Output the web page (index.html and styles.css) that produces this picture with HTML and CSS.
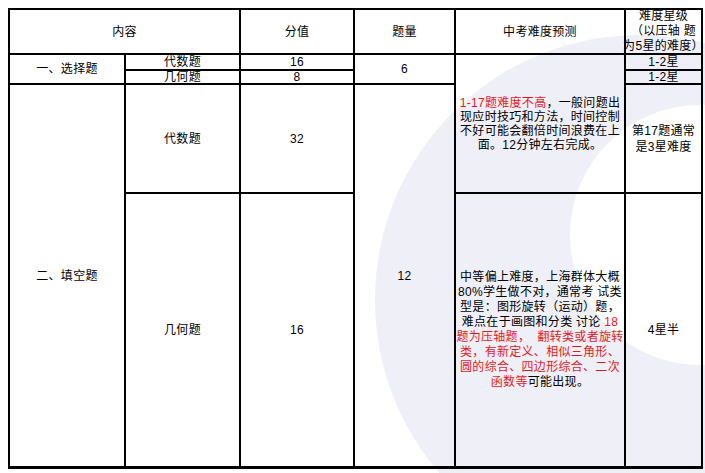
FILE: index.html
```html
<!DOCTYPE html>
<html lang="zh-CN">
<head>
<meta charset="utf-8">
<title>中考题型难度</title>
<link rel="stylesheet" href="styles.css">
</head>
<body>
<svg class="watermark" width="705" height="473" viewBox="0 0 705 473" aria-hidden="true">
  <path fill-rule="evenodd" fill="#efeff7" d="M375 300a265 265 0 1 0 530 0a265 265 0 1 0 -530 0Z M570 235a130 130 0 1 0 260 0a130 130 0 1 0 -260 0Z"/>
</svg>
<div class="sheet">
  <div class="cell span-c2">内容</div>
  <div class="cell">分值</div>
  <div class="cell">题量</div>
  <div class="cell">中考难度预测</div>
  <div class="cell lh15"><span>难度星级</span><span>（以压轴 题</span><span>为5星的难度）</span></div>

  <div class="cell span-r2">一、选择题</div>
  <div class="cell">代数题</div>
  <div class="cell">16</div>
  <div class="cell span-r2">6</div>
  <div class="cell span-r3 note">
    <span><em class="red">1-17题难度不高</em>，一般问题出</span>
    <span>现应时技巧和方法，时间控制</span>
    <span>不好可能会翻倍时间浪费在上</span>
    <span>面。12分钟左右完成。</span>
  </div>
  <div class="cell">1-2星</div>

  <div class="cell">几何题</div>
  <div class="cell">8</div>
  <div class="cell">1-2星</div>

  <div class="cell span-r2 bottom">二、填空题</div>
  <div class="cell">代数题</div>
  <div class="cell">32</div>
  <div class="cell span-r2 bottom">12</div>
  <div class="cell lh16"><span>第17题通常</span><span>是3星难度</span></div>

  <div class="cell bottom">几何题</div>
  <div class="cell bottom">16</div>
  <div class="cell bottom note lh15">
    <span>中等偏上难度，上海群体大概</span>
    <span>80%学生做不对，通常考 试类</span>
    <span>型是：图形旋转（运动）题，</span>
    <span>难点在于画图和分类 讨论 <em class="red">18</em></span>
    <span class="red">题为压轴题，  翻转类或者旋转</span>
    <span class="red">类，有新定义、相似三角形、</span>
    <span class="red">圆的综合、四边形综合、二次</span>
    <span><em class="red">函数等</em>可能出现。</span>
  </div>
  <div class="cell bottom">4星半</div>
</div>
</body>
</html>
```

FILE: styles.css
```css
html, body {
  margin: 0;
  background: #fff;
}

body {
  position: relative;
  width: 705px;
  height: 473px;
  padding: 8px;
  box-sizing: border-box;
  overflow: hidden;
  font-family: "Liberation Sans", "Noto Sans CJK SC", sans-serif;
  font-size: 12px;
  color: #000;
}

.watermark {
  position: absolute;
  left: 0;
  top: 0;
  z-index: 0;
}

.sheet {
  position: relative;
  z-index: 1;
  display: grid;
  grid-template-columns: 116px 115px 114px 101px 170px 77px;
  grid-template-rows: 45px 16px 14px 109px 275px;
  width: max-content;
  border-top: 2px solid #000;
  border-left: 2px solid #000;
}

.cell {
  box-sizing: border-box;
  border-right: 2px solid #000;
  border-bottom: 2px solid #000;
  display: flex;
  flex-direction: column;
  align-items: center;
  justify-content: center;
  text-align: center;
  line-height: 12px;
  letter-spacing: 0.3px;
  white-space: pre;
  overflow: visible;
}

.cell span {
  display: block;
}

.span-c2 { grid-column: span 2; }
.span-r2 { grid-row: span 2; }
.span-r3 { grid-row: span 3; }

.bottom {
  border-bottom-width: 3px;
}

.note {
  line-height: 14px;
}

.lh15 { line-height: 15px; }
.lh16 { line-height: 16px; }

.red,
em.red {
  color: #e8191c;
  font-style: normal;
}

em {
  font-style: normal;
}
```
